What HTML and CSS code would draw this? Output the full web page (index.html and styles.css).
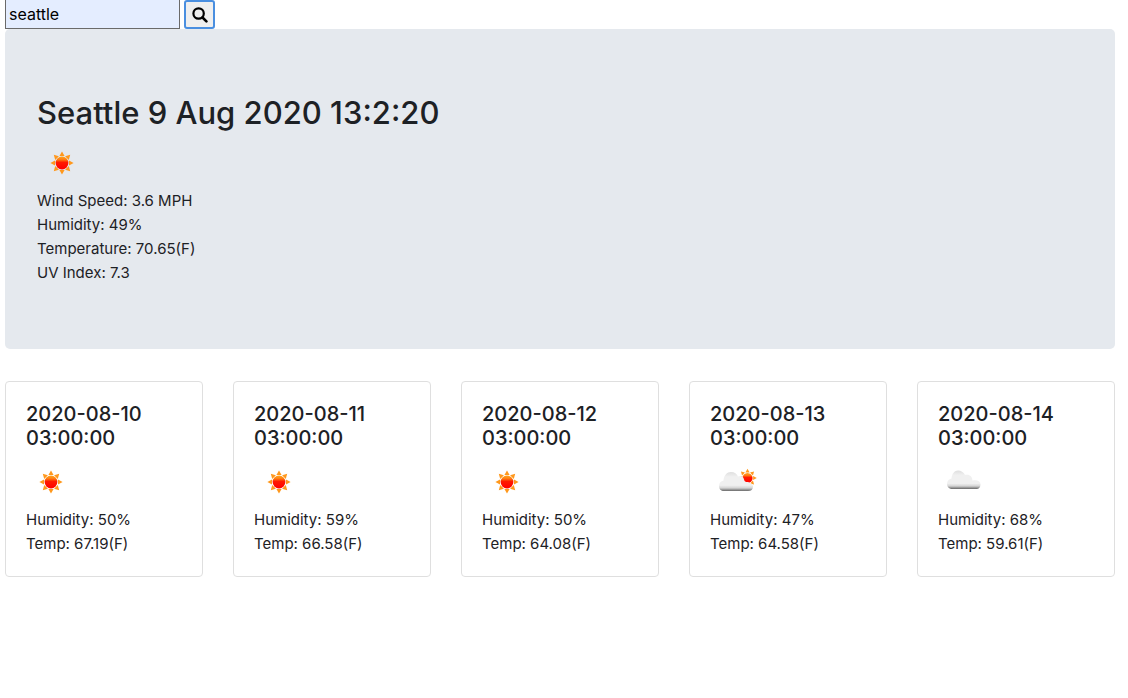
FILE: index.html
```html
<!DOCTYPE html>
<html lang="en">
<head>
<meta charset="utf-8">
<meta name="viewport" content="width=device-width, initial-scale=1">
<title>Weather Dashboard</title>
<link rel="stylesheet" href="styles.css">
</head>
<body>
<svg class="defs" aria-hidden="true">
  <defs>
    <linearGradient id="disk" x1="0" y1="0" x2="0" y2="1"><stop offset="0" stop-color="#ffa51f"/><stop offset=".25" stop-color="#ff7a10"/><stop offset=".45" stop-color="#ff1a00"/><stop offset="1" stop-color="#ff0000"/></linearGradient>
    <linearGradient id="puff" x1="0" y1="0" x2="0" y2="1"><stop offset="0" stop-color="#dedede"/><stop offset=".25" stop-color="#f0f0f0"/><stop offset=".7" stop-color="#f0f0f0"/><stop offset=".84" stop-color="#d4d4d4"/><stop offset=".9" stop-color="#aaaaaa"/><stop offset="1" stop-color="#686868"/></linearGradient>
    <g id="sun-shape">
      <g fill="#ff981c">
        <path id="r" d="M-2.6-7 0-11.6 2.6-7z"/>
        <use href="#r" transform="rotate(45)"/><use href="#r" transform="rotate(90)"/><use href="#r" transform="rotate(135)"/>
        <use href="#r" transform="rotate(180)"/><use href="#r" transform="rotate(225)"/><use href="#r" transform="rotate(270)"/><use href="#r" transform="rotate(315)"/>
      </g>
      <circle r="6.4" fill="url(#disk)"/>
    </g>
    <symbol id="sun" viewBox="0 0 50 50"><use href="#sun-shape" x="25" y="24"/></symbol>
    <symbol id="partly" viewBox="0 0 50 50">
      <use href="#sun-shape" transform="translate(37.5 20) scale(.8)"/>
      <path fill="url(#puff)" d="M14 33c-3 0-5-2-5-5s2-5 4.500-5.500C14 17 17 14 21 14c3.500 0 6 2 7 4.500 3-1.500 5.500 0 6 3 .5 1.500 1 2 2 2.500 4 0 7 1.500 7 4.500S41 33 38 33z"/>
    </symbol>
    <symbol id="cloud" viewBox="0 0 50 50">
      <path fill="url(#puff)" d="M13 31c-2.500-.5-4-2.500-4-5 0-3 2-5 4.500-5.500C14 15.500 16.500 12.500 20 12.500c3 0 5.500 1.500 7 4.500 3.500-.8 7 .5 7.500 5.500 4-.8 8 .5 8 4 0 2.500-1.500 4.500-4 4.500z"/>
    </symbol>
  </defs>
</svg>
<div class="container">
  <form class="search">
    <input class="search-input" type="text" value="seattle" aria-label="City">
    <button class="search-button" type="button" aria-label="Search">
      <svg class="search-icon" viewBox="0 0 16 16" fill="none" stroke="#000" aria-hidden="true"><circle cx="6.600" cy="6.500" r="5.200" stroke-width="2.200"/><path d="m10.500 10.500 3.900 3.900" stroke-width="2.600" stroke-linecap="round"/></svg>
    </button>
  </form>
  <main>
    <section class="current">
      <h2 class="current-title">Seattle 9 Aug 2020 13:2:20</h2>
      <svg class="weather-icon" role="img" aria-label="Clear"><use href="#sun"/></svg>
      <p class="line">Wind Speed: 3.6 MPH</p>
      <p class="line">Humidity: 49%</p>
      <p class="line">Temperature: 70.65(F)</p>
      <p class="line">UV Index: 7.3</p>
    </section>
    <section class="forecast">
      <article class="card">
        <h5 class="card-title">2020-08-10 03:00:00</h5>
        <svg class="weather-icon" role="img" aria-label="Clear"><use href="#sun"/></svg>
        <p class="line">Humidity: 50%</p>
        <p class="line">Temp: 67.19(F)</p>
      </article>
      <article class="card">
        <h5 class="card-title">2020-08-11 03:00:00</h5>
        <svg class="weather-icon" role="img" aria-label="Clear"><use href="#sun"/></svg>
        <p class="line">Humidity: 59%</p>
        <p class="line">Temp: 66.58(F)</p>
      </article>
      <article class="card">
        <h5 class="card-title">2020-08-12 03:00:00</h5>
        <svg class="weather-icon" role="img" aria-label="Clear"><use href="#sun"/></svg>
        <p class="line">Humidity: 50%</p>
        <p class="line">Temp: 64.08(F)</p>
      </article>
      <article class="card">
        <h5 class="card-title">2020-08-13 03:00:00</h5>
        <svg class="weather-icon" role="img" aria-label="Partly cloudy"><use href="#partly"/></svg>
        <p class="line">Humidity: 47%</p>
        <p class="line">Temp: 64.58(F)</p>
      </article>
      <article class="card">
        <h5 class="card-title">2020-08-14 03:00:00</h5>
        <svg class="weather-icon" role="img" aria-label="Cloudy"><use href="#cloud"/></svg>
        <p class="line">Humidity: 68%</p>
        <p class="line">Temp: 59.61(F)</p>
      </article>
    </section>
  </main>
</div>
</body>
</html>
```

FILE: styles.css
```css
*, *::before, *::after { box-sizing: border-box; }

body {
  margin: 0;
  background: #fff;
  color: #1d2125;
  font: 400 16px/24px Inter, "Liberation Sans", sans-serif;
}

h2, h5, p { margin: 0; }

.defs { position: absolute; width: 0; height: 0; }

.container { padding: 0 13px 0 5px; }

.search { display: flex; align-items: flex-start; gap: 4px; }

.search-input {
  width: 175px;
  height: 29px;
  padding: 0 3px;
  border: 1px solid #6a6a6a;
  border-top: 0;
  border-radius: 0;
  background: #e4edff;
  color: #000;
  font: inherit;
  outline: none;
}

.search-button {
  display: flex;
  align-items: center;
  justify-content: center;
  width: 31px;
  height: 29px;
  padding: 0;
  border: 2px solid #4a8fe0;
  border-radius: 3px;
  background: #efefef;
}

.search-icon { width: 16px; height: 16px; }

.current {
  margin-bottom: 32px;
  padding: 64px 32px;
  border-radius: 5px;
  background: #e5e9ee;
}

.current-title {
  margin-bottom: 6px;
  font-size: 31px;
  font-weight: 500;
  line-height: 40px;
}

.weather-icon { display: block; width: 50px; height: 50px; }

.line { font-size: 15px; }

.forecast {
  display: grid;
  grid-template-columns: repeat(5, minmax(0, 1fr));
  gap: 30px;
}

.card {
  padding: 20px;
  border: 1px solid #dfdfdf;
  border-radius: 4px;
}

.card-title {
  margin-bottom: 8px;
  font-size: 20px;
  font-weight: 500;
  line-height: 24px;
}
```
